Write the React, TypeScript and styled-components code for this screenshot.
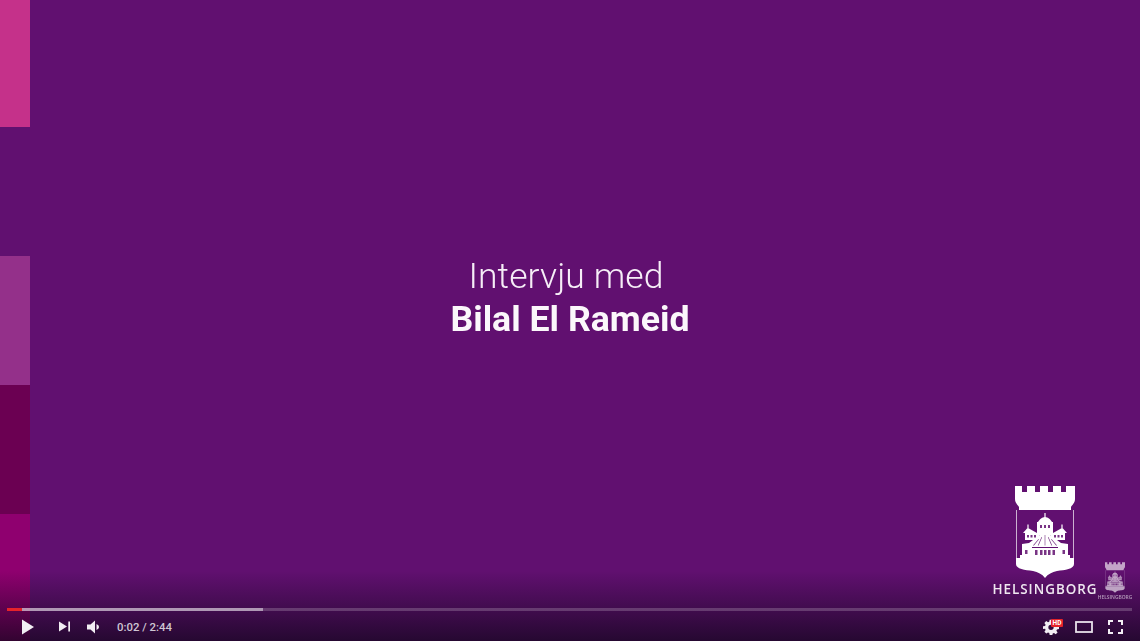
import React from "react";
import styled, { createGlobalStyle } from "styled-components";

const Global = createGlobalStyle`
  html, body { margin: 0; padding: 0; background: #611070; }
  #root { width: 1140px; height: 641px; overflow: hidden; }
`;

const Stage = styled.div`
  position: relative;
  width: 1140px;
  height: 641px;
  display: flex;
  background: #611070;
  overflow: hidden;
  font-family: Roboto, "Liberation Sans", sans-serif;
`;

const Strip = styled.div`
  width: 30px;
  height: 641px;
  display: flex;
  flex-direction: column;
  flex: none;
`;

const StripBlock = styled.div<{ $h: number; $c: string }>`
  height: ${(p) => p.$h}px;
  background: ${(p) => p.$c};
  flex: none;
`;

const Center = styled.div`
  flex: 1;
  display: flex;
  flex-direction: column;
  align-items: center;
  padding-top: 255px;
  padding-right: 30px;
  color: #fff;
  filter: blur(0.35px);
`;

const Intro = styled.div`
  font-size: 35.5px;
  font-weight: 300;
  line-height: 43px;
  letter-spacing: 0.1px;
  color: #f6eef7;
  margin-right: 8px;
`;

const Name = styled.div`
  font-size: 35.7px;
  font-weight: 700;
  line-height: 43px;
  color: #fbf7fb;
`;

const Shade = styled.div`
  position: absolute;
  left: 0;
  right: 0;
  bottom: 0;
  height: 70px;
  background: linear-gradient(to bottom, rgba(15, 5, 25, 0), rgba(15, 5, 25, 0.72));
`;

const LogoBig = styled.div`
  position: absolute;
  left: 990px;
  top: 486px;
  width: 110px;
  display: flex;
  flex-direction: column;
  align-items: center;
  filter: blur(0.45px);
`;

const LogoBigText = styled.div`
  font-family: "Open Sans", sans-serif;
  font-size: 13.4px;
  font-weight: 600;
  line-height: 16px;
  letter-spacing: 1px;
  color: #efe7f0;
  margin-top: 3px;
  white-space: nowrap;
`;

const LogoSmall = styled.div`
  position: absolute;
  left: 1095px;
  top: 562px;
  width: 40px;
  display: flex;
  flex-direction: column;
  align-items: center;
  opacity: 0.62;
  filter: blur(0.35px);
`;

const LogoSmallText = styled.div`
  font-family: "Open Sans", sans-serif;
  font-size: 4.9px;
  font-weight: 600;
  line-height: 7px;
  color: #f2e9f3;
  margin-top: 1px;
  white-space: nowrap;
`;

const Controls = styled.div`
  position: absolute;
  left: 7px;
  right: 8px;
  bottom: 0;
  height: 33px;
  display: flex;
  flex-direction: column;
`;

const Track = styled.div`
  height: 3px;
  flex: none;
  display: flex;
  background: rgba(255, 255, 255, 0.2);
`;

const Played = styled.div`
  width: 15px;
  background: #e5232a;
`;

const Loaded = styled.div`
  width: 241px;
  background: rgba(255, 255, 255, 0.48);
`;

const Bar = styled.div`
  flex: 1;
  display: flex;
  align-items: center;
  justify-content: space-between;
  padding-top: 1px;
`;

const Side = styled.div`
  display: flex;
  align-items: center;
`;

const IconBox = styled.div<{ $w: number; $mr?: number }>`
  position: relative;
  width: ${(p) => p.$w}px;
  margin-right: ${(p) => p.$mr ?? 0}px;
  height: 28px;
  display: flex;
  align-items: center;
  justify-content: center;
  flex: none;
`;

const Time = styled.div`
  font-family: Roboto, "Liberation Sans", sans-serif;
  font-size: 11.4px;
  font-weight: 500;
  color: #cfc6d3;
  margin-left: 8px;
  white-space: nowrap;
`;

const HdBadge = styled.div`
  position: absolute;
  left: 15px;
  top: 6px;
  width: 12px;
  height: 8px;
  background: #e5232a;
  border-radius: 1px;
  color: #fff;
  font-size: 6.5px;
  font-weight: 700;
  line-height: 8px;
  text-align: center;
`;

const Shield = ({ w, h }: { w: number; h: number }) => (
  <svg width={w} height={h} viewBox="0 0 60 92">
    <path
      fill="#fff"
      d="M0 0h7v6h5V0h8v6h5V0h8v6h5V0h8v6h5V0h9v13c0 4-3 6-4 8v3H4v-3c-1-2-4-4-4-8z"
    />
    <path
      fill="#fff"
      d="M1 72 H59 V78 C59 83 50 84 42 85 C37 86 33 88 30 92 C27 88 23 86 18 85 C10 84 1 83 1 78 Z"
    />
    <path fill="none" stroke="#fff" strokeOpacity="0.75" strokeWidth="0.9" d="M1.500 24V73M58.500 24V73" />
    <g fill="#fff">
      <path d="M29.400 27h1.200v5h-1.200z" />
      <path d="M23 36c1-2 4-5 7-5s6 3 7 5z" />
      <path d="M22 36h16v13H22z" />
      <path d="M8 47l4-4.500h.4v-4h1.200v4h.4l8 4.500z" />
      <path d="M52 47l-4-4.500h-.4v-4h-1.200v4h-.4l-8 4.500z" />
      <path d="M10 47h14v7H10zM36 47h14v7H36z" />
      <path d="M30 45L14 57 7 58v3h46v-3l-7-1z" />
      <path d="M7 60h10v12H7zM43 60h10v12H43zM17 62h26v10H17z" />
      <path d="M5 69h50v3H5z" />
    </g>
    <g fill="#611070" fillOpacity="0.85">
      <path d="M25 39h2v3h-2zM29 39h2v3h-2zM33 39h2v3h-2z" />
      <path d="M12 49h2v2.500h-2zM15.500 49h2v2.500h-2zM19 49h2v2.500h-2zM39 49h2v2.500h-2zM42.500 49h2v2.500h-2zM46 49h2v2.500h-2z" />
      <path d="M29.700 49h.6v10.500h-.6zM26.500 51l.6.3-3.500 8.200h-.8zM33.500 51l-.6.3 3.500 8.200h.8zM23.500 53l.4.5-5 6h-1zM36.500 53l-.4.5 5 6h1z" />
      <path d="M20 64h2.500v5H20zM25 64h2.500v5H25zM29 64h2.500v5H29zM33 64h2.500v5H33zM37.500 64H40v5h-2.500zM10 64h2.500v4H10zM47.500 64H50v4h-2.500z" />
    </g>
  </svg>
);

const Play = () => (
  <svg width="14" height="16" viewBox="0 0 14 16">
    <path fill="#f2eef3" d="M1 .5 13 8 1 15.500z" />
  </svg>
);

const Next = () => (
  <svg width="12" height="11" viewBox="0 0 12 11">
    <path fill="#f2eef3" d="M1 .500 9 5.500 1 10.500zM10.300.500H12v10h-1.700z" />
  </svg>
);

const Volume = () => (
  <svg width="14" height="14" viewBox="0 0 14 14">
    <path fill="#f2eef3" d="M0 4.500h3.500L8 .500v13L3.500 9.500H0z" />
    <path fill="#f2eef3" d="M9.500 4c1.600.8 2.500 1.800 2.500 3s-.9 2.200-2.500 3z" />
  </svg>
);

const Gear = () => (
  <svg width="16" height="16" viewBox="0 0 24 24">
    <path
      fill="#f2eef3"
      fillRule="evenodd"
      d="M10 1h4l.6 3.100 1.900.8 2.600-1.800 2.800 2.800-1.800 2.600.8 1.900L24 11v4l-3.100.600-.8 1.900 1.800 2.600-2.800 2.800-2.600-1.800-1.900.8L14 24h-4l-.6-3.100-1.900-.8-2.600 1.800-2.800-2.800 1.800-2.600-.8-1.900L0 15v-4l3.100-.600.8-1.900L2.100 5.900 4.900 3.100l2.600 1.800 1.900-.8zM12 8.500a4 4 0 1 0 0 8 4 4 0 0 0 0-8z"
    />
  </svg>
);

const Theater = () => (
  <svg width="18" height="12" viewBox="0 0 18 12">
    <rect x="1" y="1" width="16" height="10" fill="none" stroke="#e8e2ea" strokeWidth="1.800" />
  </svg>
);

const Full = () => (
  <svg width="15" height="14" viewBox="0 0 15 14">
    <path
      fill="none"
      stroke="#f2eef3"
      strokeWidth="2"
      d="M1 5V1h4M10 1h4v4M14 9v4h-4M5 13H1V9"
    />
  </svg>
);

export default function App() {
  return (
    <Stage>
      <Global />
      <Strip>
        <StripBlock $h={127} $c="#c5318a" />
        <StripBlock $h={129} $c="#611070" />
        <StripBlock $h={129} $c="#94308a" />
        <StripBlock $h={129} $c="#6b0052" />
        <StripBlock $h={127} $c="#8f006f" />
      </Strip>
      <Center>
        <Intro>Intervju med</Intro>
        <Name>Bilal El Rameid</Name>
      </Center>
      <Shade />
      <LogoBig>
        <Shield w={60} h={92} />
        <LogoBigText>HELSINGBORG</LogoBigText>
      </LogoBig>
      <LogoSmall>
        <Shield w={20} h={31} />
        <LogoSmallText>HELSINGBORG</LogoSmallText>
      </LogoSmall>
      <Controls>
        <Track>
          <Played />
          <Loaded />
        </Track>
        <Bar>
          <Side>
            <IconBox $w={42}>
              <Play />
            </IconBox>
            <IconBox $w={30}>
              <Next />
            </IconBox>
            <IconBox $w={30}>
              <Volume />
            </IconBox>
            <Time>0:02 / 2:44</Time>
          </Side>
          <Side>
            <IconBox $w={30} $mr={4}>
              <Gear />
              <HdBadge>HD</HdBadge>
            </IconBox>
            <IconBox $w={28}>
              <Theater />
            </IconBox>
            <IconBox $w={34}>
              <Full />
            </IconBox>
          </Side>
        </Bar>
      </Controls>
    </Stage>
  );
}
